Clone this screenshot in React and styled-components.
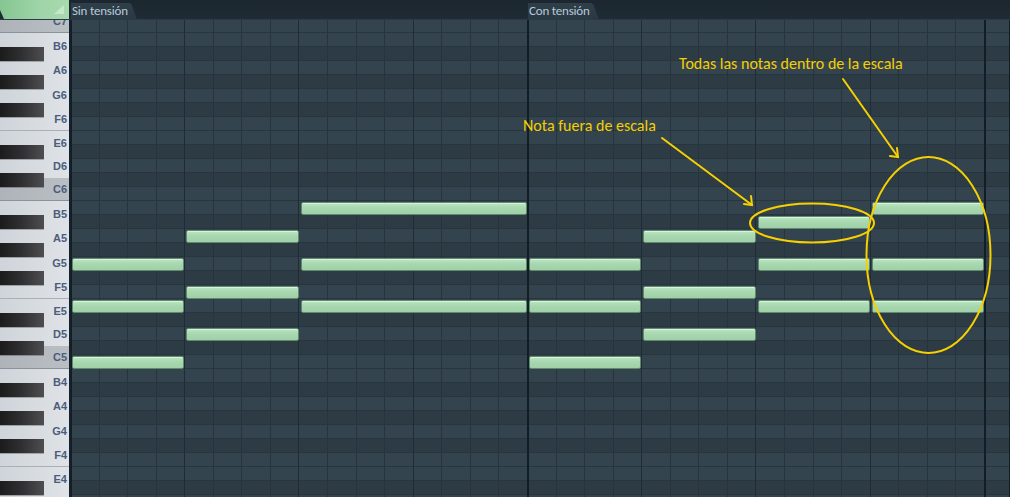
import React from 'react';
import styled, { createGlobalStyle } from 'styled-components';

const ROW = 14;
const BEAT = 114.25;
const PITCH = ['C', 'C#', 'D', 'D#', 'E', 'F', 'F#', 'G', 'G#', 'A', 'A#', 'B'];
const TOP_PITCH = 84; // C7
const LOW_KEY = 52; // E4, last labelled key
const ROW_COUNT = 35;

const rowIndex = (name) => {
    const oct = parseInt(name.slice(-1), 10);
    const pc = PITCH.indexOf(name.slice(0, -1));
    return TOP_PITCH - (oct * 12 + pc);
};

const rows = Array.from({ length: ROW_COUNT }, (_, k) => {
    const p = TOP_PITCH - k;
    const n = PITCH[p % 12];
    return { k, name: n + Math.floor(p / 12), black: n.includes('#') };
});

// white keys from C7 down, C-E share 5 rows, F-B share 7 rows
const whiteKeys = [];
for (let p = TOP_PITCH; p >= LOW_KEY; p--) {
    const n = PITCH[p % 12];
    if (n.includes('#')) continue;
    const small = ['C', 'D', 'E'].includes(n);
    whiteKeys.push({ name: n + Math.floor(p / 12), isC: n === 'C', isF: n === 'F', h: small ? 70 / 3 : 24.5 });
}

const notes = [
    { b: 0, len: 1, n: 'G5' }, { b: 0, len: 1, n: 'E5' }, { b: 0, len: 1, n: 'C5' },
    { b: 1, len: 1, n: 'A5' }, { b: 1, len: 1, n: 'F5' }, { b: 1, len: 1, n: 'D5' },
    { b: 2, len: 2, n: 'B5' }, { b: 2, len: 2, n: 'G5' }, { b: 2, len: 2, n: 'E5' },
    { b: 4, len: 1, n: 'G5' }, { b: 4, len: 1, n: 'E5' }, { b: 4, len: 1, n: 'C5' },
    { b: 5, len: 1, n: 'A5' }, { b: 5, len: 1, n: 'F5' }, { b: 5, len: 1, n: 'D5' },
    { b: 6, len: 1, n: 'A#5' }, { b: 6, len: 1, n: 'G5' }, { b: 6, len: 1, n: 'E5' },
    { b: 7, len: 1, n: 'B5' }, { b: 7, len: 1, n: 'G5' }, { b: 7, len: 1, n: 'E5' },
];

const GlobalStyle = createGlobalStyle`
    html, body {
        margin: 0;
        padding: 0;
        background: #1f2a32;
        overflow: hidden;
    }
`;

const Root = styled.div`
    position: relative;
    width: 1010px;
    height: 497px;
    overflow: hidden;
    display: flex;
    flex-direction: column;
    background: #1f2a32;
    font-family: Carlito, "Open Sans", sans-serif;
`;

const Header = styled.div`
    display: flex;
    align-items: stretch;
    height: 20px;
    flex-shrink: 0;
    box-sizing: border-box;
    background: linear-gradient(#1b262e, #202c35);
    border-bottom: 1px solid #2c3a44;
`;

const Corner = styled.div`
    position: relative;
    width: 69px;
    margin-right: 2px;
    background: linear-gradient(to right, #86c692, #9fd5a8 60%, #a8daaf);
    clip-path: polygon(0 0, 100% 0, 100% 100%, 4px 100%, 0 10px);
`;

const CornerMark = styled.div`
    position: absolute;
    right: 5px;
    top: 5px;
    width: 10px;
    height: 9px;
    background: #c3e9c8;
    clip-path: polygon(100% 0, 100% 100%, 0 100%);
`;

const BarHeads = styled.div`
    display: flex;
    flex: 1;
    align-items: flex-end;
`;

const BarHead = styled.div`
    width: ${BEAT * 4}px;
    flex-shrink: 0;
    height: 100%;
    display: flex;
    align-items: flex-end;
`;

const Tab = styled.div`
    height: 16px;
    padding: 0 9px 0 1px;
    display: flex;
    align-items: center;
    background: linear-gradient(#2f3f4a, #2a3843);
    clip-path: polygon(0 0, calc(100% - 7px) 0, calc(100% - 5px) 2px, 100% 100%, 0 100%);
    color: #b7cbd9;
    font-size: 13px;
    line-height: 16px;
    letter-spacing: -0.2px;
    white-space: nowrap;
`;

const Body = styled.div`
    display: flex;
    flex: 1;
    min-height: 0;
`;

const Piano = styled.div`
    position: relative;
    width: 69px;
    flex-shrink: 0;
    overflow: hidden;
    border-right: 2px solid #14202a;
    background: linear-gradient(to right, #cfd4da, #dfe3e7);
`;

const WhiteCol = styled.div`
    display: flex;
    flex-direction: column;
    margin-top: -10.33px;
`;

const WhiteKey = styled.div`
    box-sizing: border-box;
    height: ${(p) => p.$h}px;
    flex-shrink: 0;
    display: flex;
    align-items: center;
    justify-content: flex-end;
    padding: 1px 2px 0 0;
    background: ${(p) => (p.$c
        ? 'linear-gradient(to right, #aeb3b9, #babfc4)'
        : 'linear-gradient(to right, #cfd4da, #dfe3e7)')};
    border-bottom: ${(p) => (p.$c ? '1px solid #8b9299' : p.$f ? '1px solid #a9afb6' : '0')};
    font-family: "Liberation Sans", Arial, sans-serif;
    font-weight: bold;
    font-size: 11px;
    color: #4b5d7c;
`;

const BlackKey = styled.div`
    position: absolute;
    left: 0;
    width: 44px;
    height: ${ROW}px;
    background: linear-gradient(to right, #1b1b1c, #303032 50%, #4e4e50);
    box-shadow: 0 1px 0 rgba(0, 0, 0, 0.25);
`;

const Grid = styled.div`
    position: relative;
    flex: 1;
    overflow: hidden;
`;

const Rows = styled.div`
    display: flex;
    flex-direction: column;
    margin-top: -1px;
`;

const Row = styled.div`
    box-sizing: border-box;
    height: ${ROW}px;
    flex-shrink: 0;
    border-bottom: 1px solid #28353e;
    background: ${(p) => (p.$black ? '#2d3b45' : '#34444e')};
`;

const Lines = styled.div`
    position: absolute;
    inset: 0;
    pointer-events: none;
    background-image:
        repeating-linear-gradient(to right, #121d26 0 2px, transparent 2px ${BEAT * 4}px),
        repeating-linear-gradient(to right, #202c35 0 1px, transparent 1px ${BEAT}px),
        repeating-linear-gradient(to right, #27343d 0 1px, transparent 1px ${BEAT / 4}px);
    background-position: -1px 0, -1px 0, -1px 0;
`;

const Note = styled.div`
    position: absolute;
    box-sizing: border-box;
    height: 13px;
    border: 1px solid #5f8a6b;
    border-radius: 2px;
    background: linear-gradient(#bde5c3, #a9d8b1 40%, #9fd0a7);
    box-shadow: inset 0 1px 0 rgba(235, 255, 238, 0.6);
`;

const Overlay = styled.svg`
    position: absolute;
    left: 0;
    top: 0;
    pointer-events: none;
`;

const Callout = styled.span`
    position: absolute;
    left: ${(p) => p.$x}px;
    top: ${(p) => p.$y}px;
    color: #f4cf00;
    font-size: 16px;
    line-height: 18px;
    white-space: nowrap;
`;

const YELLOW = '#f6d000';

const Arrow = ({ x1, y1, x2, y2 }) => (
    <g stroke={YELLOW} strokeWidth="2" fill="none" strokeLinecap="round">
        <line x1={x1} y1={y1} x2={x2} y2={y2} />
        <polyline points={`${x2 - 8},${y2 - 1} ${x2},${y2} ${x2 - 1},${y2 - 9}`} />
    </g>
);

const App = () => (
    <>
        <GlobalStyle />
        <Root>
            <Header>
                <Corner>
                    <CornerMark />
                </Corner>
                <BarHeads>
                    <BarHead><Tab>Sin tensión</Tab></BarHead>
                    <BarHead><Tab>Con tensión</Tab></BarHead>
                </BarHeads>
            </Header>
            <Body>
                <Piano>
                    <WhiteCol>
                        {whiteKeys.map((w) => (
                            <WhiteKey key={w.name} $h={w.h} $c={w.isC} $f={w.isF}>{w.name}</WhiteKey>
                        ))}
                    </WhiteCol>
                    {rows.filter((r) => r.black).map((r) => (
                        <BlackKey key={r.name} style={{ top: r.k * ROW - 1 }} />
                    ))}
                </Piano>
                <Grid>
                    <Rows>
                        {rows.map((r) => <Row key={r.name} $black={r.black} />)}
                    </Rows>
                    <Lines />
                    {notes.map((n, i) => (
                        <Note
                            key={i}
                            style={{
                                left: n.b * BEAT + 1,
                                top: rowIndex(n.n) * ROW,
                                width: n.len * BEAT - 2,
                            }}
                        />
                    ))}
                </Grid>
            </Body>
            <Overlay width="1010" height="497" viewBox="0 0 1010 497">
                <ellipse cx="812" cy="223" rx="62" ry="19.5" stroke={YELLOW} strokeWidth="2" fill="none" />
                <ellipse cx="928.5" cy="255" rx="62" ry="98" stroke={YELLOW} strokeWidth="2" fill="none" />
                <Arrow x1={662} y1={138} x2={752} y2={205} />
                <Arrow x1={843} y1={79} x2={898} y2={157} />
            </Overlay>
            <Callout $x={523} $y={117}>Nota fuera de escala</Callout>
            <Callout $x={679} $y={55}>Todas las notas dentro de la escala</Callout>
        </Root>
    </>
);

export default App;
